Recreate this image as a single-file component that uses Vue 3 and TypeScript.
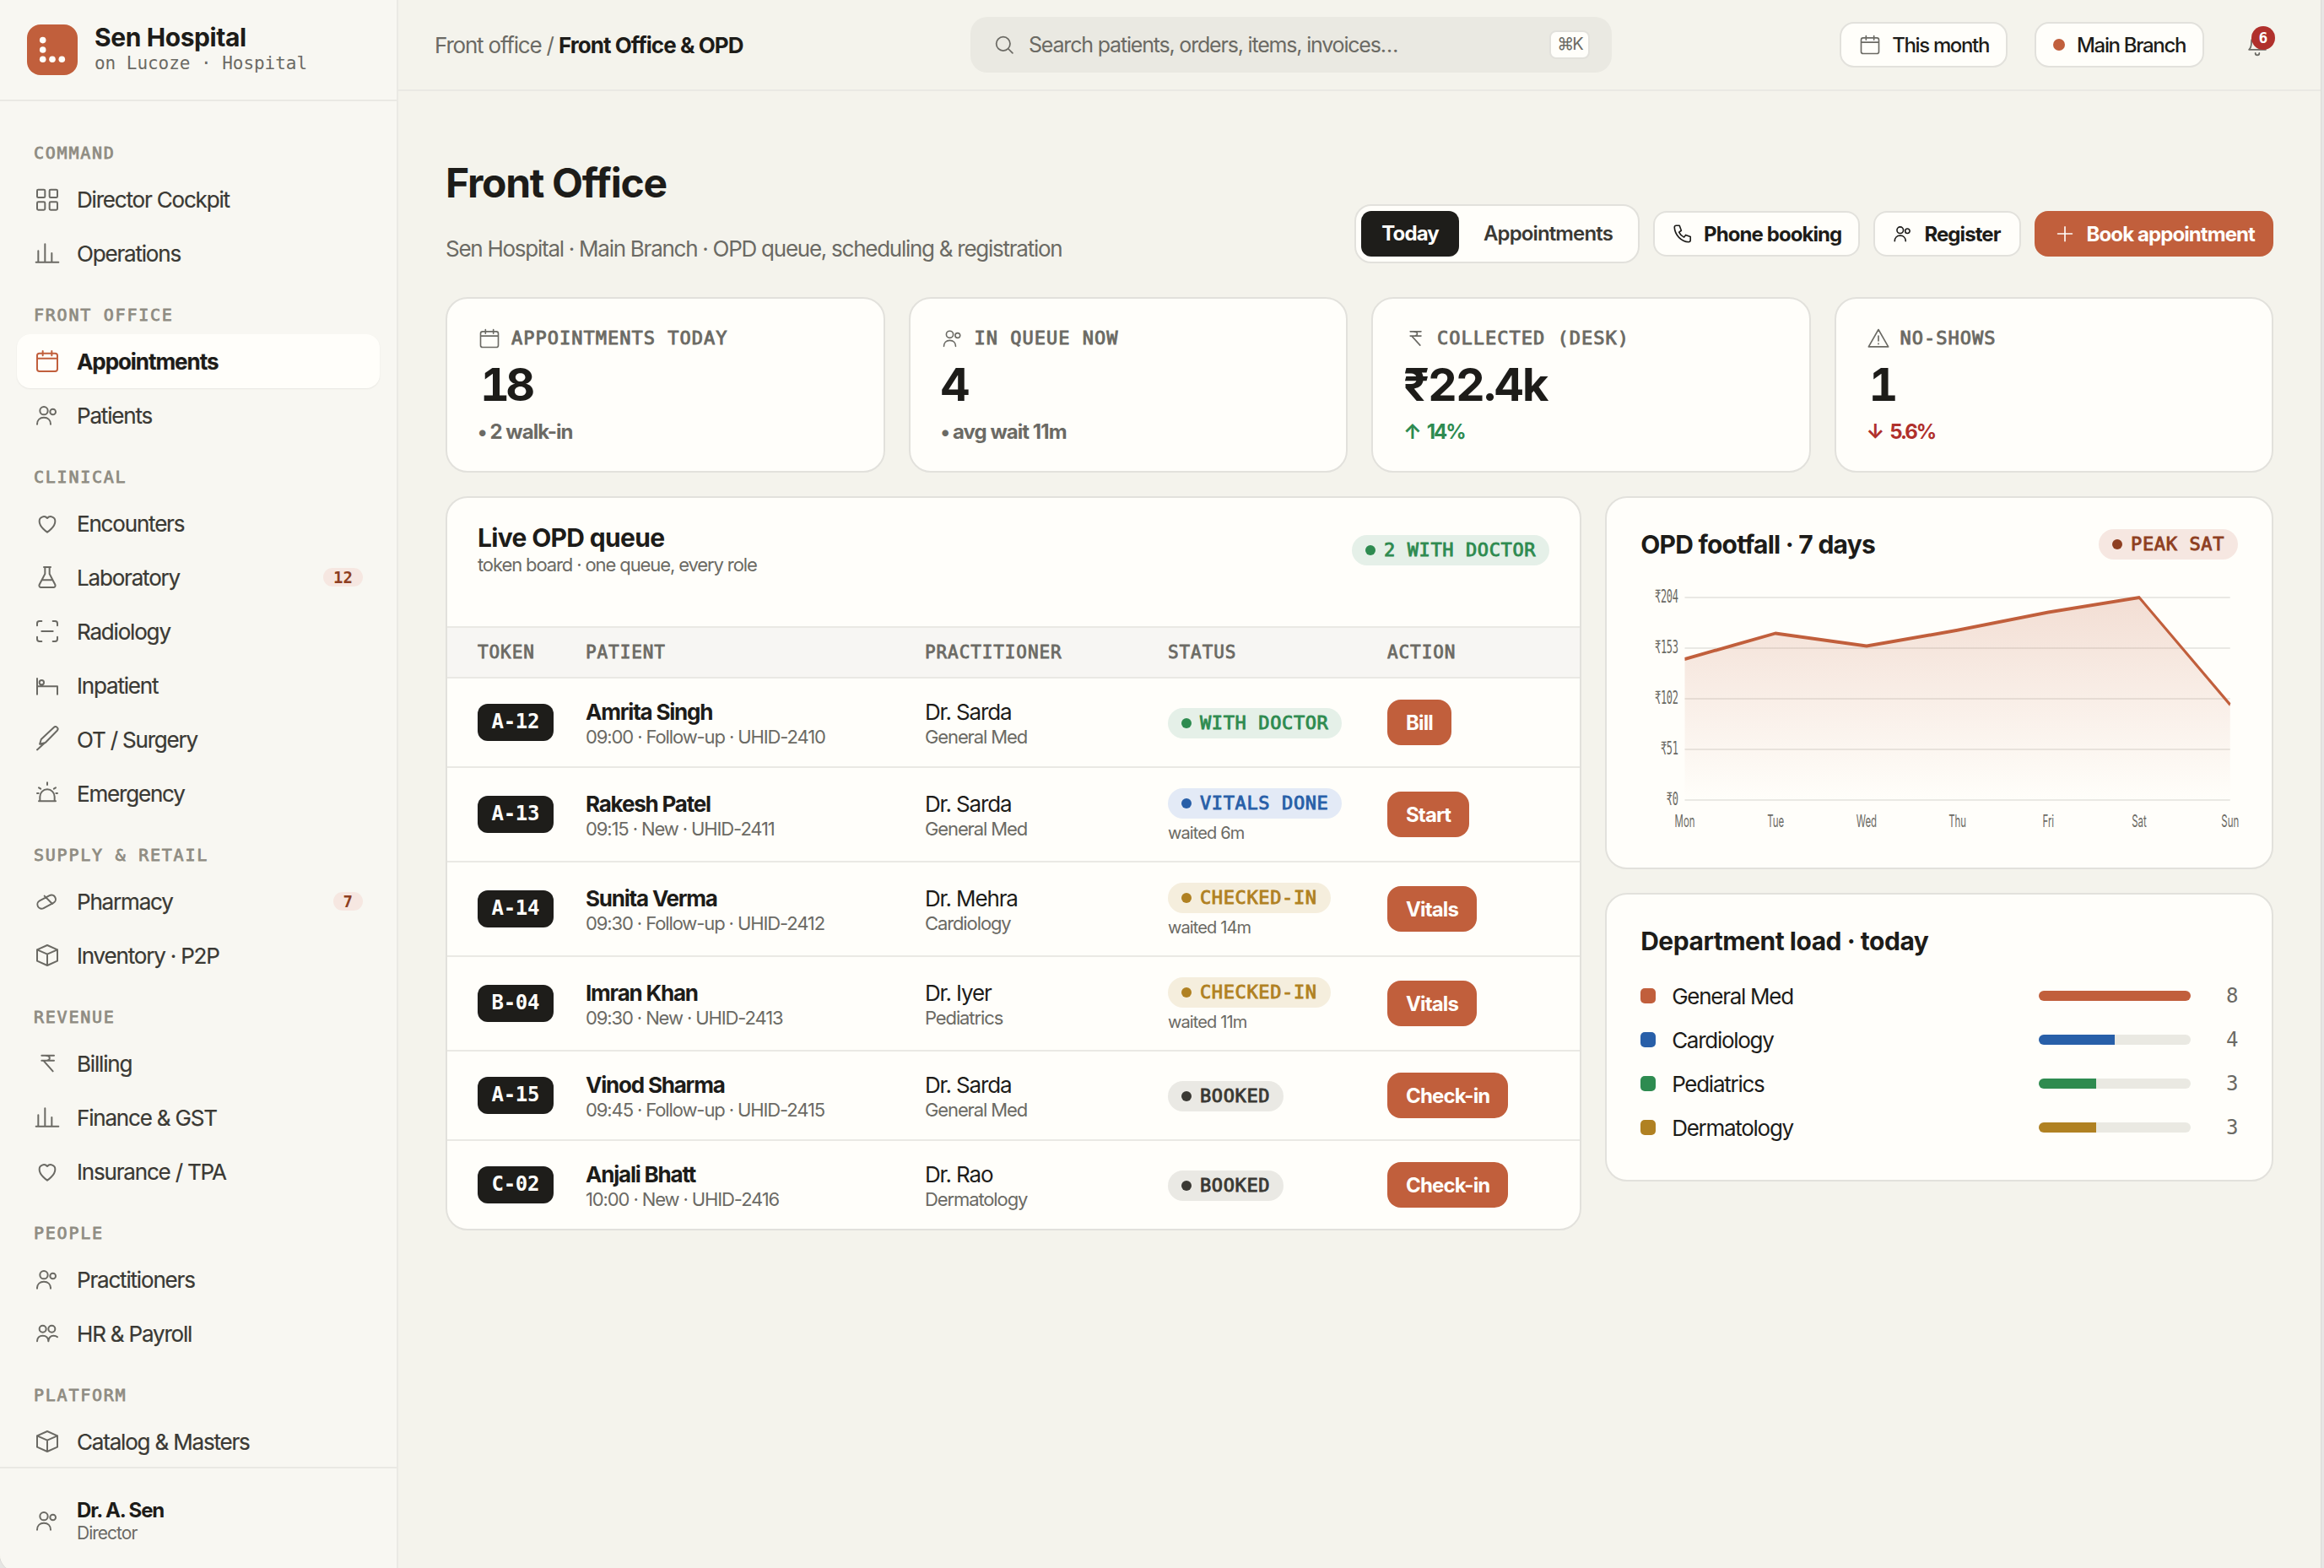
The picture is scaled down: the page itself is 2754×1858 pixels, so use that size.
<script setup lang="ts">
import { defineComponent, h } from 'vue'

type IconName =
  | 'grid' | 'bars' | 'calendar' | 'people' | 'team' | 'heart' | 'flask' | 'scan' | 'bed'
  | 'scalpel' | 'siren' | 'pill' | 'box' | 'rupee' | 'search' | 'bell' | 'phone' | 'plus' | 'alert'

const icons: Record<IconName, string> = {
  grid: 'M4 3.5h5a1 1 0 0 1 1 1V9.500a1 1 0 0 1-1 1H4a1 1 0 0 1-1-1V4.500a1 1 0 0 1 1-1zM15 3.500h5a1 1 0 0 1 1 1V9.500a1 1 0 0 1-1 1h-5a1 1 0 0 1-1-1V4.500a1 1 0 0 1 1-1zM4 14.500h5a1 1 0 0 1 1 1v5a1 1 0 0 1-1 1H4a1 1 0 0 1-1-1v-5a1 1 0 0 1 1-1zM15 14.500h5a1 1 0 0 1 1 1v5a1 1 0 0 1-1 1h-5a1 1 0 0 1-1-1v-5a1 1 0 0 1 1-1z',
  bars: 'M2 20h20M4 20V10M10 20V4M16 20v-8',
  calendar: 'M5 5h14a2 2 0 0 1 2 2v12a2 2 0 0 1-2 2H5a2 2 0 0 1-2-2V7a2 2 0 0 1 2-2zM3 9.500h18M8 3v4M16 3v4',
  people: 'M9 4.500a3.500 3.500 0 1 1 0 7a3.500 3.500 0 0 1 0-7zM3 20c0-3.600 2.400-6 6-6s6 2.400 6 6M17 6.500a2.500 2.500 0 1 1 0 5a2.500 2.500 0 0 1 0-5z',
  team: 'M8 5a3 3 0 1 1 0 6a3 3 0 0 1 0-6zM16 5a3 3 0 1 1 0 6a3 3 0 0 1 0-6zM3 19c0-3 2-5 5-5s5 2 5 5M13 19c.300-3 1.800-5 4.500-5 1.400 0 2.600.400 3.500 1.200',
  heart: 'M12 20s-7-4.500-7-9.700A4 4 0 0 1 12 7.500a4 4 0 0 1 7 2.800C19 15.500 12 20 12 20z',
  flask: 'M9 3h6M10 3v6l-5 9.500A1.700 1.700 0 0 0 6.500 21h11a1.700 1.700 0 0 0 1.500-2.500L14 9V3M7.500 14.500h9',
  scan: 'M3 7V5a2 2 0 0 1 2-2h2M17 3h2a2 2 0 0 1 2 2v2M21 17v2a2 2 0 0 1-2 2h-2M7 21H5a2 2 0 0 1-2-2v-2M7 12h10',
  bed: 'M3 6v14M3 13h18v7M7 7.500a2 2 0 1 1 0 4a2 2 0 0 1 0-4z',
  scalpel: 'M3 21.300l5.500-5M5.300 16.300l1.300-4.300L17.800 1.500a2 2 0 0 1 3 2.800L10.300 15z M5.300 16.300l3.200 0 1.800-1.300',
  siren: 'M4.500 19h15M5.500 19v-4a6.500 6.500 0 0 1 13 0v4M12 2.500v2M3 12h1.200M19.800 12H21M4.500 7l1.600 1M19.500 7l-1.600 1',
  pill: 'M5.200 11.600l8.800-4.700a3.700 3.700 0 0 1 5 1.500 3.700 3.700 0 0 1-1.500 5l-8.700 4.700a3.700 3.700 0 0 1-5.100-1.500 3.700 3.700 0 0 1 1.500-5zM9.500 7.200l7 7',
  box: 'M12 3l9 4v10l-9 4-9-4V7zM3 7l9 4 9-4M12 11v10',
  rupee: 'M7 5h11M7 9.500h11M7 5h3c5.500 0 5.500 4.500 0 4.500H8.500L17 19',
  search: 'M11 4a7 7 0 1 1 0 14a7 7 0 0 1 0-14zM16.500 16.500L20.500 20.500',
  bell: 'M6 9a6 6 0 0 1 12 0c0 6 2.500 8 2.500 8h-17S6 15 6 9M10 20.500a2 2 0 0 0 4 0',
  phone: 'M5 3h3.500l2 5.500-2.500 1.700a12 12 0 0 0 5.500 5.600l1.800-2.500 5.200 2V19a2 2 0 0 1-2 2C10.500 20.500 3.500 13.500 3 5a2 2 0 0 1 2-2z',
  plus: 'M12 4.500v15.500M4.200 12h15.600',
  alert: 'M12 3L22 20.500H2zM12 9.500v5M12 17.200v.6',
}

const Icon = defineComponent({
  props: { name: { type: String, required: true }, size: { type: Number, default: 32 }, stroke: { type: Number, default: 1.5 } },
  setup: (p) => () =>
    h('svg', {
      width: p.size, height: p.size, viewBox: '0 0 24 24', fill: 'none', stroke: 'currentColor',
      'stroke-width': p.stroke, 'stroke-linecap': 'round', 'stroke-linejoin': 'round', style: 'flex:none;display:block',
    }, [h('path', { d: icons[p.name as IconName] })]),
})

interface NavItem { icon: IconName; label: string; badge?: string; active?: boolean }
const nav: { title: string; items: NavItem[] }[] = [
  { title: 'COMMAND', items: [{ icon: 'grid', label: 'Director Cockpit' }, { icon: 'bars', label: 'Operations' }] },
  { title: 'FRONT OFFICE', items: [{ icon: 'calendar', label: 'Appointments', active: true }, { icon: 'people', label: 'Patients' }] },
  {
    title: 'CLINICAL',
    items: [
      { icon: 'heart', label: 'Encounters' },
      { icon: 'flask', label: 'Laboratory', badge: '12' },
      { icon: 'scan', label: 'Radiology' },
      { icon: 'bed', label: 'Inpatient' },
      { icon: 'scalpel', label: 'OT / Surgery' },
      { icon: 'siren', label: 'Emergency' },
    ],
  },
  { title: 'SUPPLY & RETAIL', items: [{ icon: 'pill', label: 'Pharmacy', badge: '7' }, { icon: 'box', label: 'Inventory · P2P' }] },
  { title: 'REVENUE', items: [{ icon: 'rupee', label: 'Billing' }, { icon: 'bars', label: 'Finance & GST' }, { icon: 'heart', label: 'Insurance / TPA' }] },
  { title: 'PEOPLE', items: [{ icon: 'people', label: 'Practitioners' }, { icon: 'team', label: 'HR & Payroll' }] },
  { title: 'PLATFORM', items: [{ icon: 'box', label: 'Catalog & Masters' }] },
]

const kpis: { icon: IconName; label: string; value: string; mark: string; note: string; tone: string }[] = [
  { icon: 'calendar', label: 'APPOINTMENTS TODAY', value: '18', mark: '•', note: '2 walk-in', tone: 'flat' },
  { icon: 'people', label: 'IN QUEUE NOW', value: '4', mark: '•', note: 'avg wait 11m', tone: 'flat' },
  { icon: 'rupee', label: 'COLLECTED (DESK)', value: '₹22.4k', mark: '↑', note: '14%', tone: 'up' },
  { icon: 'alert', label: 'NO-SHOWS', value: '1', mark: '↓', note: '5.6%', tone: 'down' },
]

const queue = [
  { token: 'A-12', name: 'Amrita Singh', sub: '09:00 · Follow-up · UHID-2410', dr: 'Dr. Sarda', dept: 'General Med', status: 'WITH DOCTOR', tone: 'green', wait: '', action: 'Bill' },
  { token: 'A-13', name: 'Rakesh Patel', sub: '09:15 · New · UHID-2411', dr: 'Dr. Sarda', dept: 'General Med', status: 'VITALS DONE', tone: 'blue', wait: 'waited 6m', action: 'Start' },
  { token: 'A-14', name: 'Sunita Verma', sub: '09:30 · Follow-up · UHID-2412', dr: 'Dr. Mehra', dept: 'Cardiology', status: 'CHECKED-IN', tone: 'amber', wait: 'waited 14m', action: 'Vitals' },
  { token: 'B-04', name: 'Imran Khan', sub: '09:30 · New · UHID-2413', dr: 'Dr. Iyer', dept: 'Pediatrics', status: 'CHECKED-IN', tone: 'amber', wait: 'waited 11m', action: 'Vitals' },
  { token: 'A-15', name: 'Vinod Sharma', sub: '09:45 · Follow-up · UHID-2415', dr: 'Dr. Sarda', dept: 'General Med', status: 'BOOKED', tone: 'gray', wait: '', action: 'Check-in' },
  { token: 'C-02', name: 'Anjali Bhatt', sub: '10:00 · New · UHID-2416', dr: 'Dr. Rao', dept: 'Dermatology', status: 'BOOKED', tone: 'gray', wait: '', action: 'Check-in' },
]

const days = [
  { d: 'Mon', v: 142 }, { d: 'Tue', v: 168 }, { d: 'Wed', v: 155 }, { d: 'Thu', v: 171 },
  { d: 'Fri', v: 189 }, { d: 'Sat', v: 204 }, { d: 'Sun', v: 96 },
]
const ticks = [204, 153, 102, 51, 0]
const px = (i: number) => 46 + (i * 566) / 6
const py = (v: number) => 10 + 120 * (1 - v / 204)
const line = days.map((p, i) => `${i ? 'L' : 'M'}${px(i).toFixed(1)} ${py(p.v).toFixed(1)}`).join('')
const area = `${line}L612 130L46 130Z`

const depts = [
  { name: 'General Med', n: 8, color: '#c15f3c' },
  { name: 'Cardiology', n: 4, color: '#285fa8' },
  { name: 'Pediatrics', n: 3, color: '#2e8b50' },
  { name: 'Dermatology', n: 3, color: '#b08122' },
]
</script>

<template>
  <div class="app">
    <aside class="side">
      <div class="brand">
        <div class="logo">
          <svg width="60" height="60" viewBox="0 0 60 60" fill="#fffefa">
            <circle cx="18.700" cy="18.600" r="3.800" /><circle cx="18.700" cy="30" r="3.800" />
            <circle cx="18.700" cy="41.300" r="3.800" /><circle cx="30" cy="41.300" r="3.800" /><circle cx="41.300" cy="41.300" r="3.800" />
          </svg>
        </div>
        <div>
          <div class="brand-name">Sen Hospital</div>
          <div class="brand-sub">on Lucoze · Hospital</div>
        </div>
      </div>
      <nav class="nav">
        <section v-for="s in nav" :key="s.title">
          <div class="nav-title">{{ s.title }}</div>
          <a v-for="it in s.items" :key="it.label" class="nav-item" :class="{ active: it.active }">
            <Icon :name="it.icon" />
            <span>{{ it.label }}</span>
            <b v-if="it.badge" class="nav-badge">{{ it.badge }}</b>
          </a>
        </section>
      </nav>
      <div class="user">
        <Icon name="people" />
        <div>
          <div class="user-name">Dr. A. Sen</div>
          <div class="user-role">Director</div>
        </div>
      </div>
    </aside>

    <main class="main">
      <header class="top">
        <div class="crumb">Front office / <b>Front Office &amp; OPD</b></div>
        <div class="search">
          <Icon name="search" :size="28" />
          <span>Search patients, orders, items, invoices…</span>
          <kbd>⌘K</kbd>
        </div>
        <div class="top-right">
          <div class="chip"><Icon name="calendar" :size="28" :stroke="1.4" /><span>This month</span></div>
          <div class="chip branch"><i></i><span>Main Branch</span></div>
          <div class="bell"><Icon name="bell" :size="28" /><em>6</em></div>
        </div>
      </header>

      <div class="page">
        <div class="head">
          <div>
            <h1>Front Office</h1>
            <p>Sen Hospital · Main Branch · OPD queue, scheduling &amp; registration</p>
          </div>
          <div class="actions">
            <div class="seg"><span class="on">Today</span><span>Appointments</span></div>
            <button class="btn"><Icon name="phone" :size="26" /><span>Phone booking</span></button>
            <button class="btn register"><Icon name="people" :size="26" /><span>Register</span></button>
            <button class="btn primary"><Icon name="plus" :size="26" /><span>Book appointment</span></button>
          </div>
        </div>

        <div class="kpis">
          <div v-for="k in kpis" :key="k.label" class="card kpi">
            <div class="kpi-label"><Icon :name="k.icon" :size="28" :stroke="1.4" /><span>{{ k.label }}</span></div>
            <div class="kpi-value" :class="{ narrow: k.value.startsWith('1') }">{{ k.value }}</div>
            <div class="kpi-note" :class="k.tone"><span>{{ k.mark }}</span><span>{{ k.note }}</span></div>
          </div>
        </div>

        <div class="cols">
          <div class="card queue">
            <div class="queue-head">
              <div>
                <h2>Live OPD queue</h2>
                <div class="queue-sub">token board · one queue, every role</div>
              </div>
              <span class="pill green"><i></i>2 WITH DOCTOR</span>
            </div>
            <div class="tr th"><span>TOKEN</span><span>PATIENT</span><span>PRACTITIONER</span><span>STATUS</span><span>ACTION</span></div>
            <div v-for="q in queue" :key="q.token" class="tr td" :class="{ tall: q.wait }">
              <div><span class="token">{{ q.token }}</span></div>
              <div><div class="name">{{ q.name }}</div><div class="sub">{{ q.sub }}</div></div>
              <div><div class="dr">{{ q.dr }}</div><div class="sub">{{ q.dept }}</div></div>
              <div class="status"><span class="pill" :class="q.tone"><i></i>{{ q.status }}</span><div v-if="q.wait" class="wait">{{ q.wait }}</div></div>
              <div><button class="act">{{ q.action }}</button></div>
            </div>
          </div>

          <div class="right">
            <div class="card panel">
              <div class="panel-head"><h2 class="footfall">OPD footfall · 7 days</h2><span class="pill accent"><i></i>PEAK SAT</span></div>
              <svg class="chart" viewBox="0 0 620 150" preserveAspectRatio="none">
                <defs>
                  <linearGradient id="fade" x1="0" y1="0" x2="0" y2="1">
                    <stop offset="0" stop-color="#c15f3c" stop-opacity=".2" />
                    <stop offset="1" stop-color="#c15f3c" stop-opacity="0" />
                  </linearGradient>
                </defs>
                <g v-for="t in ticks" :key="t">
                  <line x1="46" x2="612" :y1="py(t)" :y2="py(t)" stroke="#eae9e4" stroke-width="1" />
                  <text x="39" :y="py(t) + 3.2" text-anchor="end" class="tick">₹{{ t }}</text>
                </g>
                <path :d="area" fill="url(#fade)" />
                <path :d="line" fill="none" stroke="#c15f3c" stroke-width="2" />
                <text v-for="(p, i) in days" :key="p.d" :x="px(i)" y="146" text-anchor="middle" class="day">{{ p.d }}</text>
              </svg>
            </div>
            <div class="card panel load">
              <div class="panel-head"><h2 class="dept-title">Department load · today</h2></div>
              <div v-for="d in depts" :key="d.name" class="dept">
                <i class="swatch" :style="{ background: d.color }"></i>
                <span class="dept-name">{{ d.name }}</span>
                <div class="bar"><div :style="{ width: (d.n / 8) * 100 + '%', background: d.color }"></div></div>
                <span class="count">{{ d.n }}</span>
              </div>
            </div>
          </div>
        </div>
      </div>
    </main>
  </div>
</template>

<style>
html, body { margin: 0; background: #e6e6e4; overflow: hidden; height: 1858px; }
#app { height: 1858px; overflow: hidden; }
</style>

<style scoped>
* { box-sizing: border-box; }
.app {
  width: 2750px; height: 1862px; display: flex; background: #f4f3ec; color: #1d1c19;
  border-radius: 0 0 0 20px; overflow: hidden; box-shadow: 0 0 0 1px #dcdbd8;
  font-family: Inter, sans-serif; font-size: 26px; white-space: nowrap;
}
h1, h2, p { margin: 0; }
button { font-family: inherit; border: 0; margin: 0; }

.side { width: 472px; flex: none; background: #f8f7f2; border-right: 2px solid #eae9e4; display: flex; flex-direction: column; }
.brand { height: 120px; flex: none; border-bottom: 2px solid #eae9e4; padding: 0 32px; display: flex; align-items: center; gap: 20px; }
.logo { width: 60px; height: 60px; border-radius: 16px; background: #c15f3c; }
.logo svg { display: block; }
.brand-name { font-size: 30px; font-weight: 700; line-height: 33px; letter-spacing: -.0136em; }
.brand-sub { font-family: "DejaVu Sans Mono", monospace; font-size: 21px; line-height: 29px; color: #6b6a64; letter-spacing: -.002em; }
.nav { flex: 1; min-height: 0; overflow: hidden; padding: 20px 20px 0; }
.nav-title {
  height: 64px; display: flex; align-items: flex-end; padding: 0 0 11px 20px; font: 20px/24px "DejaVu Sans Mono", monospace;
  letter-spacing: .088em; color: #8f8c82; -webkit-text-stroke: .8px #8f8c82;
}
.nav-item { height: 64px; display: flex; align-items: center; gap: 19px; padding: 0 20px; border-radius: 16px; color: #6b6a64; }
.nav-item span { color: #3a3934; letter-spacing: -.0455em; -webkit-text-stroke: .2px #3a3934; }
.nav-item.active { background: #fffefa; color: #c15f3c; box-shadow: 0 1px 2px rgba(30, 29, 26, .07); }
.nav-item.active span { color: #1d1c19; font-weight: 650; letter-spacing: -.041em; }
.nav-badge {
  margin-left: auto; height: 22px; padding: 0 12px; border-radius: 11px; background: #f6e7e1; color: #8e3f22;
  font: 700 19px/22px "DejaVu Sans Mono", monospace;
}
.user { height: 124px; flex: none; border-top: 2px solid #eae9e4; padding: 2px 40px 0; display: flex; align-items: center; gap: 19px; color: #6b6a64; }
.user-name { color: #1d1c19; font-size: 24px; font-weight: 650; line-height: 29px; letter-spacing: -.047em; }
.user-role { font-size: 21px; line-height: 25px; letter-spacing: -.047em; }

.main { flex: 1; min-width: 0; }
.top { height: 108px; border-bottom: 2px solid #eae9e4; padding: 0 44px 0 43px; display: flex; align-items: center; color: #6b6a64; }
.crumb { width: 635px; letter-spacing: -.046em; }
.crumb b { color: #1d1c19; font-weight: 650; letter-spacing: -.0365em; }
.search { width: 760px; height: 66px; border-radius: 20px; background: #eae9e2; display: flex; align-items: center; padding: 0 26px; }
.search span { margin-left: 15px; font-size: 25px; letter-spacing: -.0475em; }
kbd {
  margin-left: auto; width: 48px; height: 34px; border: 2px solid #e2e1dc; border-radius: 8px; background: #fffefa;
  font: 20px/29px Inter, sans-serif; letter-spacing: -.1em; text-align: center;
}
.top-right { margin-left: auto; display: flex; align-items: center; gap: 32px; }
.chip {
  height: 54px; border: 2px solid #e2e1dc; border-radius: 17px; background: #fffefa; padding: 0 20px;
  display: flex; align-items: center; gap: 12px; font-size: 24px; font-weight: 500;
}
.chip span { color: #1d1c19; letter-spacing: -.056em; }
.branch { gap: 14px; }
.branch i { width: 14px; height: 14px; border-radius: 50%; background: #c15f3c; }
.bell { width: 62px; height: 62px; display: flex; align-items: center; justify-content: center; position: relative; }
.bell em {
  position: absolute; left: 24px; top: 9px; width: 28px; height: 28px; border-radius: 50%; background: #b0302c; color: #fff;
  font: 700 18px/28px "DejaVu Sans Mono", monospace; text-align: center;
}

.page { padding: 56px 56px 0; }
.head { height: 148px; display: flex; justify-content: space-between; align-items: flex-end; }
h1 { font-size: 48px; font-weight: 700; line-height: 60px; letter-spacing: -.027em; }
.head p { margin-top: 30px; line-height: 35px; color: #6b6a64; letter-spacing: -.0485em; }
.actions { display: flex; align-items: center; gap: 16px; font-size: 24px; font-weight: 650; }
.seg { height: 70px; border: 2px solid #e2e1dc; border-radius: 20px; background: #fffefa; padding: 6px; display: flex; gap: 5px; }
.seg span { line-height: 54px; border-radius: 12px; padding: 0 24px; color: #3a3934; letter-spacing: -.036em; font-weight: 600; }
.seg .on { background: #1e1d1a; color: #fffefa; font-weight: 650; }
.btn {
  height: 54px; border: 2px solid #e2e1dc; border-radius: 16px; background: #fffefa; color: #1d1c19; padding: 0 20px;
  display: flex; align-items: center; gap: 12px; font-size: 24px; font-weight: 650; letter-spacing: -.038em;
}
.btn.register { padding-right: 22px; }
.btn.primary { background: #c15f3c; border-color: #c15f3c; color: #fffefa; padding-left: 21px; gap: 13px; }

.card { background: #fffefa; border: 2px solid #e2e1dc; border-radius: 26px; }
.kpis { margin-top: 40px; display: grid; grid-template-columns: repeat(4, 1fr); gap: 28px; }
.kpi { height: 208px; padding: 33px 36px 0; }
.kpi-label {
  height: 28px; display: flex; align-items: center; gap: 12px; color: #6b6a64;
  font: 22px/28px "DejaVu Sans Mono", monospace; letter-spacing: .046em;
}
.kpi-label span { -webkit-text-stroke: .9px #6b6a64; }
.kpi-value { margin-top: 11px; font-size: 54px; font-weight: 700; line-height: 60px; letter-spacing: -.034em; font-variant-numeric: tabular-nums; }
.kpi-value.narrow { padding-left: 3px; letter-spacing: -.085em; }
.kpi-note { margin-top: 10px; display: flex; gap: 4px; font-size: 24px; font-weight: 650; line-height: 32px; letter-spacing: -.04em; color: #6b6a64; }
.kpi-note.up, .kpi-note.down { gap: 8px; letter-spacing: -.085em; }
.kpi-note.up { color: #2e8b50; }
.kpi-note.down { color: #b0302c; }

.cols { margin-top: 28px; display: grid; grid-template-columns: 1.7fr 1fr; gap: 28px; align-items: start; }
h2 { font-size: 30px; font-weight: 650; line-height: 34px; letter-spacing: -.0225em; }
.footfall { letter-spacing: -.0255em; }
.dept-title { letter-spacing: -.016em; }
.queue { overflow: hidden; }
.queue-head { height: 152px; padding: 30px 36px 58px; display: flex; justify-content: space-between; align-items: center; }
.queue-sub { font-size: 22px; line-height: 31px; color: #6b6a64; letter-spacing: -.0505em; }
.pill {
  height: 36px; padding: 0 16px; border-radius: 18px; display: inline-flex; align-items: center; gap: 10px;
  font: 22px/36px "DejaVu Sans Mono", monospace; letter-spacing: .028em; -webkit-text-stroke: .9px currentColor;
}
.pill i { width: 12px; height: 12px; border-radius: 50%; background: currentColor; }
.green { color: #2e8b50; background: #e5f0e8; }
.blue { color: #285fa8; background: #e3eaf6; }
.amber { color: #b08122; background: #f5eedd; }
.gray { color: #3a3934; background: #eae9e4; }
.accent { color: #8e3f22; background: #f6e7e1; }
.tr { display: grid; grid-template-columns: 128px 402px 288px 260px 1fr; align-items: center; padding: 0 36px; }
.th {
  height: 62px; background: #f7f6f3; border-top: 2px solid #eae9e4; border-bottom: 2px solid #eae9e4; color: #6b6a64;
  font: 21px/30px "DejaVu Sans Mono", monospace; letter-spacing: .043em; -webkit-text-stroke: .8px #6b6a64;
}
.td { height: 106px; border-bottom: 2px solid #eae9e4; }
.td.tall { height: 112px; }
.td:last-child { height: 104px; border-bottom: 0; }
.token {
  display: inline-block; height: 44px; padding: 0 16.5px; border-radius: 12px; background: #1e1d1a; color: #fffefa; vertical-align: top;
  font: 700 24px/43px "DejaVu Sans Mono", monospace; letter-spacing: -.0132em;
}
.name { font-weight: 650; line-height: 32px; padding-top: 2px; margin-bottom: -1px; letter-spacing: -.0465em; }
.dr { line-height: 32px; padding-top: 2px; margin-bottom: -1px; letter-spacing: -.0446em; }
.sub { font-size: 22px; line-height: 28px; letter-spacing: -.0505em; color: #6b6a64; }
.status { display: flex; flex-direction: column; align-items: flex-start; padding-top: 1px; }
.wait { margin-top: 6px; font-size: 20px; line-height: 22px; letter-spacing: -.0437em; color: #6b6a64; }
.act { display: block; height: 54px; padding: 0 22px; border-radius: 16px; background: #c15f3c; color: #fffefa; font-size: 24px; font-weight: 650; letter-spacing: -.036em; }

.right { display: grid; gap: 28px; }
.panel { height: 442px; padding: 37px 40px 0; }
.panel-head { height: 36px; display: flex; justify-content: space-between; align-items: center; }
.chart { display: block; width: 100%; height: 300px; margin-top: 25px; overflow: visible; }
.tick { font: 10.5px "DejaVu Sans Mono", monospace; letter-spacing: -.3px; fill: #6b6a64; }
.day { font: 10px Inter, sans-serif; fill: #6b6a64; }
.load { height: 342px; }
.load .panel-head { margin-bottom: 21px; }
.dept { height: 52px; display: flex; align-items: center; }
.swatch { width: 18px; height: 18px; border-radius: 5px; }
.dept-name { margin-left: 19px; letter-spacing: -.0489em; }
.bar { margin-left: auto; width: 180px; height: 12px; border-radius: 6px; background: #eae9e2; overflow: hidden; }
.bar div { height: 100%; }
.count { width: 56px; text-align: right; font: 24px/30px "DejaVu Sans Mono", monospace; color: #6b6a64; letter-spacing: -.02em; }
</style>
